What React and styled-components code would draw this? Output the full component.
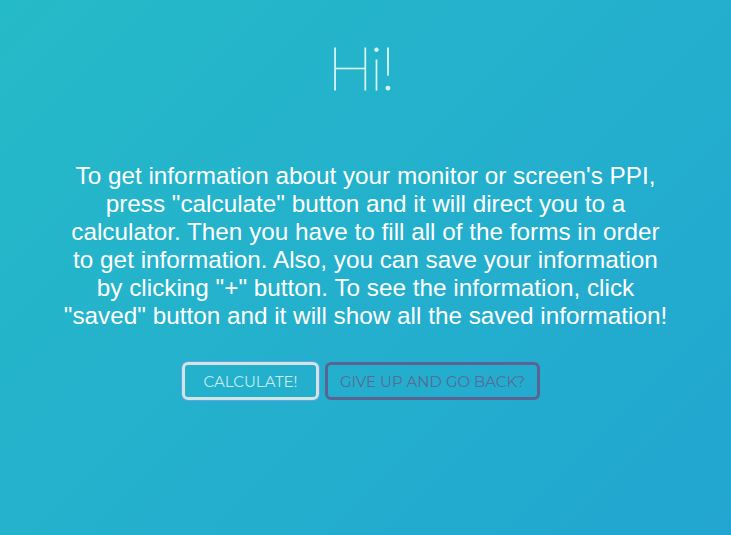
import React from "react";
import styled, { createGlobalStyle } from "styled-components";

const Global = createGlobalStyle`
  html, body { margin: 0; padding: 0; height: 100%; }
  body { background: linear-gradient(135deg, #25bac8 0%, #22a6d1 100%); min-height: 535px; }
  #root { min-height: 535px; }
`;

const Page = styled.main`
  min-height: 535px;
  display: flex;
  flex-direction: column;
  align-items: center;
  padding-top: 27px;
  box-sizing: border-box;
  background: linear-gradient(135deg, #25bac8 0%, #22a6d1 100%);
`;

const Title = styled.h1`
  margin: 0 10px 0 0;
  font-family: "Lato", sans-serif;
  font-weight: 100;
  font-size: 60px;
  line-height: 80px;
  color: #d8f1f2;
  -webkit-text-stroke: 0.9px #d8f1f2;
  letter-spacing: -2px;
`;

const Text = styled.p`
  margin: 55px 0 0;
  width: 604px;
  text-align: center;
  font-family: "Liberation Sans", Arial, sans-serif;
  font-size: 24.3px;
  line-height: 28px;
  color: #ffffff;
`;

const Buttons = styled.div`
  display: flex;
  gap: 6px;
  margin-top: 32px;
  margin-right: 9px;
`;

const Button = styled.button`
  width: ${(p) => p.$w}px;
  height: 38px;
  padding: 0;
  border-radius: 6px;
  background: transparent;
  font-family: "Montserrat", "Open Sans", sans-serif;
  font-size: 15px;
  cursor: pointer;
  border: 3px solid ${(p) => (p.$primary ? "#d3e4e4" : "#5a6391")};
  color: ${(p) => (p.$primary ? "#c7ecee" : "#5a6a94")};
  box-shadow: ${(p) => (p.$primary ? "0 0 0 1px #5fa3e6" : "none")};
`;

export default function App() {
  return (
    <>
      <Global />
      <Page>
        <Title>Hi!</Title>
        <Text>
          To get information about your monitor or screen's PPI, press "calculate" button and it will direct you to a
          calculator. Then you have to fill all of the forms in order to get information. Also, you can save your
          information by clicking "+" button. To see the information, click "saved" button and it will show all the
          saved information!
        </Text>
        <Buttons>
          <Button $primary $w={137}>CALCULATE!</Button>
          <Button $w={215}>GIVE UP AND GO BACK?</Button>
        </Buttons>
      </Page>
    </>
  );
}
